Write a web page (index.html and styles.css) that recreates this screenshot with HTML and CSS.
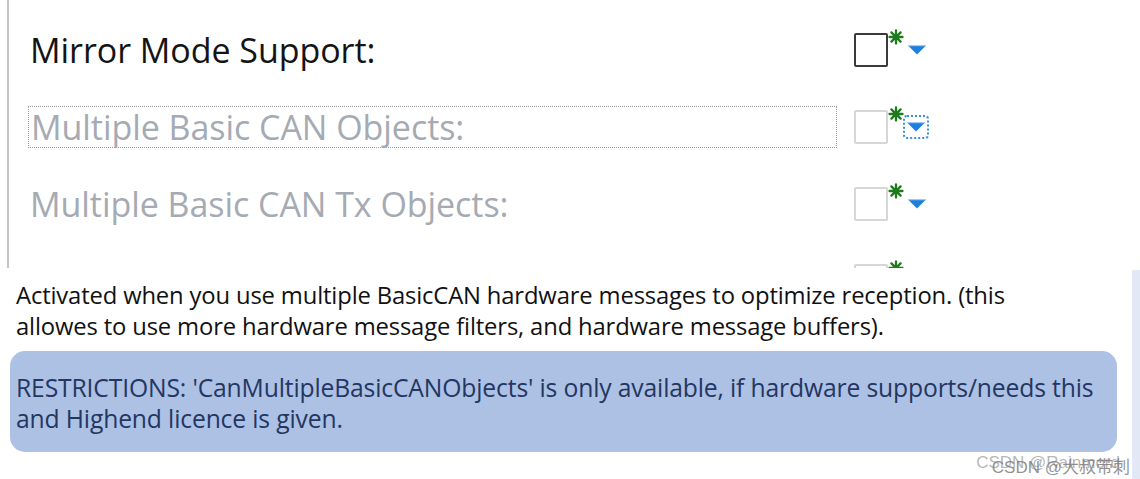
FILE: index.html
```html
<!DOCTYPE html>
<html>
<head>
<meta charset="utf-8">
<link rel="stylesheet" href="styles.css">
</head>
<body>
<div class="page">
  <section class="dialog">
    <div class="rows">
      <div class="row">
        <div class="label active">Mirror Mode Support:</div>
        <div class="ctrl">
          <span class="box dark"></span>
          <svg class="star" width="16" height="16" viewBox="0 0 16 16"><g stroke="#1d7a1d" stroke-width="2.3" stroke-linecap="round"><path d="M8 1.5V14.5M1.5 8H14.5M3.4 3.4L12.6 12.6M12.6 3.4L3.4 12.6"/></g></svg>
          <span class="arrow"><svg width="18" height="10" viewBox="0 0 18 10"><path d="M0 0.5H18L9 9.5Z" fill="#1f7fe0"/><path d="M0.5 0.6H17.5" stroke="#9cc9f5" stroke-width="1.2"/></svg></span>
        </div>
      </div>
      <div class="row">
        <div class="label focus">Multiple Basic CAN Objects:</div>
        <div class="ctrl">
          <span class="box"></span>
          <svg class="star" width="16" height="16" viewBox="0 0 16 16"><g stroke="#1d7a1d" stroke-width="2.3" stroke-linecap="round"><path d="M8 1.5V14.5M1.5 8H14.5M3.4 3.4L12.6 12.6M12.6 3.4L3.4 12.6"/></g></svg>
          <span class="arrow focused"><svg width="18" height="10" viewBox="0 0 18 10"><path d="M0 0.5H18L9 9.5Z" fill="#1f7fe0"/><path d="M0.5 0.6H17.5" stroke="#9cc9f5" stroke-width="1.2"/></svg></span>
        </div>
      </div>
      <div class="row">
        <div class="label">Multiple Basic CAN Tx Objects:</div>
        <div class="ctrl">
          <span class="box"></span>
          <svg class="star" width="16" height="16" viewBox="0 0 16 16"><g stroke="#1d7a1d" stroke-width="2.3" stroke-linecap="round"><path d="M8 1.5V14.5M1.5 8H14.5M3.4 3.4L12.6 12.6M12.6 3.4L3.4 12.6"/></g></svg>
          <span class="arrow"><svg width="18" height="10" viewBox="0 0 18 10"><path d="M0 0.5H18L9 9.5Z" fill="#1f7fe0"/><path d="M0.5 0.6H17.5" stroke="#9cc9f5" stroke-width="1.2"/></svg></span>
        </div>
      </div>
      <div class="row">
        <div class="label">Multiple Basic CAN Rx Objects:</div>
        <div class="ctrl">
          <span class="box"></span>
          <svg class="star" width="16" height="16" viewBox="0 0 16 16"><g stroke="#1d7a1d" stroke-width="2.3" stroke-linecap="round"><path d="M8 1.5V14.5M1.5 8H14.5M3.4 3.4L12.6 12.6M12.6 3.4L3.4 12.6"/></g></svg>
          <span class="arrow"><svg width="18" height="10" viewBox="0 0 18 10"><path d="M0 0.5H18L9 9.5Z" fill="#1f7fe0"/></svg></span>
        </div>
      </div>
    </div>
  </section>
  <section class="tip">
    <div class="tip-body">
      <p class="desc">Activated when you use multiple BasicCAN hardware messages to optimize reception. (this allowes to use more hardware message filters, and hardware message buffers).</p>
      <div class="restrict">RESTRICTIONS: 'CanMultipleBasicCANObjects' is only available, if hardware supports/needs this and Highend licence is given.</div>
      <div class="wm-line">
        <span class="wm">CSDN @大叔带刺</span>
        <span class="wm wm2">CSDN @Rainmord</span>
      </div>
    </div>
    <div class="tip-edge"></div>
  </section>
</div>
</body>
</html>
```
FILE: styles.css
```css
* { box-sizing: border-box; }
html, body { margin: 0; padding: 0; background: #fff; }
body { width: 1140px; height: 479px; overflow: hidden; font-family: "Open Sans", "Noto Sans", sans-serif; }

.page { width: 1140px; height: 479px; display: flex; flex-direction: column; }

.dialog {
  height: 268px;
  overflow: hidden;
  padding-left: 7px;
}
.rows {
  height: 100%;
  border-left: 2px solid #c6c6c6;
  padding-top: 11px;
  padding-left: 19px;
}
.row {
  height: 77px;
  display: flex;
  align-items: center;
}
.label {
  width: 809px;
  height: 42px;
  padding-left: 2px;
  display: flex;
  align-items: center;
  font-size: 34px;
  letter-spacing: -0.05px;
  color: #a5aab3;
  white-space: nowrap;
}
.label.active { color: #141414; }
.label.focus { border: 1.5px dotted #9a9a9a; }

.ctrl {
  margin-left: 17px;
  display: flex;
  align-items: center;
  height: 42px;
}
.box {
  width: 34px;
  height: 34px;
  border: 2px solid #d6d6d6;
  border-radius: 2px;
  background: #fff;
}
.box.dark { border-color: #3a3a3a; }
.star {
  display: block;
  align-self: flex-start;
  margin-top: 0;
  margin-left: 0;
}
.arrow {
  width: 24px;
  height: 24px;
  display: flex;
  align-items: center;
  justify-content: center;
  margin-left: 1px;
}
.arrow svg { display: block; }
.arrow.focused {
  border: 2px dotted #3c8ee6;
  border-radius: 4px;
  margin-left: -1px;
  margin-right: -2px;
  width: 26px;
}

.tip {
  flex: 1;
  display: flex;
}
.tip-body {
  flex: 1;
  padding: 12px 0 0 10px;
  display: flex;
  flex-direction: column;
}
.desc {
  margin: 0 0 0 6px;
  font-size: 23.8px;
  line-height: 31px;
  color: #111;
  width: 1040px;
  letter-spacing: -0.15px;
}
.restrict {
  margin-top: 9px;
  width: 1107px;
  height: 101px;
  background: #adc1e4;
  border-radius: 15px;
  padding: 21px 0 0 6px;
  font-size: 24.7px;
  line-height: 31px;
  letter-spacing: -0.15px;
  color: #243662;
}
.wm-line {
  position: relative;
  height: 22px;
  margin-right: 2px;
}
.wm {
  position: absolute;
  right: 0;
  top: 1px;
  font-family: "Liberation Sans", "Noto Sans CJK SC", sans-serif;
  font-size: 17px;
  color: rgba(110,110,110,0.75);
  white-space: nowrap;
}
.wm2 { right: 10px; color: rgba(120,120,120,0.55); }
.tip-edge {
  width: 8px;
  background: #e3e8f6;
  margin-top: 2px;
}
```
